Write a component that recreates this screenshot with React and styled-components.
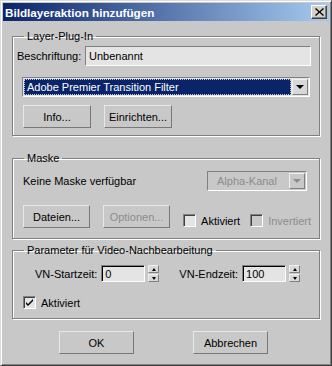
import styled, { createGlobalStyle } from "styled-components";

const Global = createGlobalStyle`
  html, body {
    margin: 0;
    padding: 0;
    background: #c8c8c8;
  }
  * {
    box-sizing: border-box;
  }
`;

const Window = styled.div`
  width: 332px;
  height: 366px;
  display: flex;
  flex-direction: column;
  background: #c8c8c8;
  border: 1px solid;
  border-color: #dcdcdc #404040 #404040 #dcdcdc;
  box-shadow: inset 1px 1px 0 #ffffff, inset -1px -1px 0 #808080;
  padding: 2px;
  font-family: "Liberation Sans", Arial, sans-serif;
  font-size: 11px;
  color: #000;
  white-space: nowrap;
`;

const TitleBar = styled.div`
  height: 18px;
  display: flex;
  align-items: center;
  justify-content: space-between;
  padding: 0 2px 0 2px;
  background: linear-gradient(to right, #0a246a, #a6caf0);
`;

const Title = styled.span`
  color: #fff;
  font-weight: bold;
  font-size: 11.7px;
`;

const CloseButton = styled.div`
  width: 16px;
  height: 14px;
  display: flex;
  align-items: center;
  justify-content: center;
  background: #d4d0c8;
  border: 1px solid;
  border-color: #ffffff #404040 #404040 #ffffff;
  box-shadow: inset -1px -1px 0 #808080;
`;

const Body = styled.div`
  flex: 1;
  display: flex;
  flex-direction: column;
  padding: 9px 9px 0 9px;
`;

const Group = styled.fieldset`
  margin: ${(p) => p.$top || 0}px 0 0 0;
  padding: ${(p) => p.$pt}px 8px ${(p) => p.$pb}px 4px;
  border: 1px solid #808080;
  box-shadow: inset 1px 1px 0 #ffffff, 1px 1px 0 #ffffff;
  min-width: 0;
  display: flex;
  flex-direction: column;
`;

const Legend = styled.legend`
  margin-left: 7px;
  padding: 0 3px;
  height: 13px;
  line-height: 13px;
`;

const Row = styled.div`
  display: flex;
  align-items: ${(p) => p.$align || "center"};
  margin-top: ${(p) => p.$mt || 0}px;
  padding-left: ${(p) => p.$pl || 0}px;
`;

const Label = styled.span`
  margin-left: ${(p) => p.$ml || 0}px;
  color: ${(p) => (p.$disabled ? "#8c8c8c" : "#000")};
`;

const TextField = styled.div`
  width: ${(p) => p.$w}px;
  height: 20px;
  margin-left: auto;
  display: flex;
  align-items: center;
  padding-left: 3px;
  background: #e4e4e4;
  border: 1px solid;
  border-color: #808080 #ffffff #ffffff #808080;
`;

const Combo = styled.div`
  width: ${(p) => p.$w}px;
  height: 20px;
  display: flex;
  align-items: stretch;
  margin: 0 ${(p) => p.$mr || 0}px 0 ${(p) => p.$ml || "0px"};
  background: ${(p) => (p.$disabled ? "#c8c8c8" : "#e4e4e4")};
  border: 1px solid;
  border-color: #808080 #ffffff #ffffff #808080;
`;

const ComboText = styled.div`
  flex: 1;
  display: flex;
  align-items: center;
  margin: 1px;
  padding-left: ${(p) => (p.$selected ? 3 : 8)}px;
  background: ${(p) => (p.$selected ? "#0a246a" : "transparent")};
  color: ${(p) => (p.$selected ? "#fff" : "#8c8c8c")};
  outline: ${(p) => (p.$selected ? "1px dotted #c8c8c8" : "none")};
  outline-offset: -1px;
`;

const ArrowButton = styled.div`
  width: 16px;
  display: flex;
  align-items: center;
  justify-content: center;
  margin: 1px 1px 1px 0;
  background: ${(p) => (p.$disabled ? "#c8c8c8" : "#d8d8d8")};
  border: 1px solid;
  border-color: #f0f0f0 #808080 #808080 #f0f0f0;
`;

const Triangle = styled.div`
  width: 0;
  height: 0;
  border-left: ${(p) => p.$size}px solid transparent;
  border-right: ${(p) => p.$size}px solid transparent;
  ${(p) =>
    p.$up
      ? `border-bottom: ${p.$h}px solid ${p.$color};`
      : `border-top: ${p.$h}px solid ${p.$color};`}
`;

const Button = styled.button`
  width: ${(p) => p.$w || 68}px;
  height: 23px;
  margin: 0 0 0 ${(p) => p.$ml || 0}px;
  padding: 0;
  background: #c8c8c8;
  border: 1px solid;
  border-color: #e8e8e8 #787878 #787878 #e8e8e8;
  font-family: "Liberation Sans", Arial, sans-serif;
  font-size: 11px;
  color: ${(p) => (p.disabled ? "#8c8c8c" : "#000")};
`;

const Check = styled.div`
  width: 13px;
  height: 13px;
  margin-left: ${(p) => p.$ml || 0}px;
  margin-right: 5px;
  display: flex;
  align-items: center;
  justify-content: center;
  background: ${(p) => (p.$disabled ? "#c8c8c8" : "#e4e4e4")};
  border: 1px solid;
  border-color: #808080 #ffffff #ffffff #808080;
  box-shadow: inset 1px 1px 0 #404040;
`;

const NumField = styled.div`
  width: 44px;
  height: 17px;
  margin-left: ${(p) => p.$ml}px;
  display: flex;
  align-items: center;
  padding-left: 3px;
  background: #e4e4e4;
  border: 1px solid;
  border-color: #808080 #ffffff #ffffff #808080;
  box-shadow: inset 1px 1px 0 #000;
`;

const Spinner = styled.div`
  width: 11px;
  height: 17px;
  margin-left: 3px;
  display: flex;
  flex-direction: column;
  gap: 1px;
`;

const SpinHalf = styled.div`
  flex: 1;
  display: flex;
  align-items: center;
  justify-content: center;
  background: #d8d8d8;
  border: 1px solid;
  border-color: #f0f0f0 #808080 #808080 #f0f0f0;
`;

const Footer = styled.div`
  display: flex;
  justify-content: space-between;
  padding: 0 52px 0 47px;
  margin-top: 12px;
`;

function CheckBox({ checked, disabled, ml, children }) {
  return (
    <>
      <Check $disabled={disabled} $ml={ml}>
        {checked && (
          <svg width="9" height="9" viewBox="0 0 9 9">
            <path d="M1 4 L3 6 L8 1 L8 3 L3 8 L1 6 Z" fill="#000" />
          </svg>
        )}
      </Check>
      <Label $disabled={disabled}>{children}</Label>
    </>
  );
}

function Spin() {
  return (
    <Spinner>
      <SpinHalf>
        <Triangle $up $size={2} $h={3} $color="#000" />
      </SpinHalf>
      <SpinHalf>
        <Triangle $size={2} $h={3} $color="#000" />
      </SpinHalf>
    </Spinner>
  );
}

function App() {
  return (
    <>
      <Global />
      <Window>
        <TitleBar>
          <Title>Bildlayeraktion hinzufügen</Title>
          <CloseButton>
            <svg width="9" height="8" viewBox="0 0 9 8">
              <path
                d="M1 0 L4.5 3.3 L8 0 L9 1 L5.5 4 L9 7 L8 8 L4.5 4.7 L1 8 L0 7 L3.5 4 L0 1 Z"
                fill="#000"
              />
            </svg>
          </CloseButton>
        </TitleBar>
        <Body>
          <Group $pt={3} $pb={7}>
            <Legend>Layer-Plug-In</Legend>
            <Row>
              <Label>Beschriftung:</Label>
              <TextField $w={226}>Unbenannt</TextField>
            </Row>
            <Row $mt={11}>
              <Combo $w={288} $ml="5px">
                <ComboText $selected>Adobe Premier Transition Filter</ComboText>
                <ArrowButton>
                  <Triangle $size={4} $h={4} $color="#000" />
                </ArrowButton>
              </Combo>
            </Row>
            <Row $mt={8} $pl={6}>
              <Button>Info...</Button>
              <Button $ml={13}>Einrichten...</Button>
            </Row>
          </Group>

          <Group $top={16} $pt={6} $pb={10}>
            <Legend>Maske</Legend>
            <Row $pl={6}>
              <Label>Keine Maske verfügbar</Label>
              <Combo $w={100} $ml="auto" $mr={4} $disabled>
                <ComboText>Alpha-Kanal</ComboText>
                <ArrowButton $disabled>
                  <Triangle $size={4} $h={4} $color="#8c8c8c" />
                </ArrowButton>
              </Combo>
            </Row>
            <Row $mt={14} $pl={6} $align="flex-end">
              <Button>Dateien...</Button>
              <Button $ml={13} disabled>
                Optionen...
              </Button>
              <Row $align="center" style={{ marginBottom: 1 }}>
                <CheckBox ml={13}>Aktiviert</CheckBox>
                <CheckBox ml={10} disabled>
                  Invertiert
                </CheckBox>
              </Row>
            </Row>
          </Group>

          <Group $top={5} $pt={8} $pb={9}>
            <Legend>Parameter für Video-Nachbearbeitung</Legend>
            <Row $pl={18}>
              <Label>VN-Startzeit:</Label>
              <NumField $ml={4}>0</NumField>
              <Spin />
              <Label $ml={20}>VN-Endzeit:</Label>
              <NumField $ml={4}>100</NumField>
              <Spin />
            </Row>
            <Row $mt={14} $pl={6}>
              <CheckBox checked>Aktiviert</CheckBox>
            </Row>
          </Group>

          <Footer>
            <Button $w={75}>OK</Button>
            <Button $w={75}>Abbrechen</Button>
          </Footer>
        </Body>
      </Window>
    </>
  );
}

export default App;
